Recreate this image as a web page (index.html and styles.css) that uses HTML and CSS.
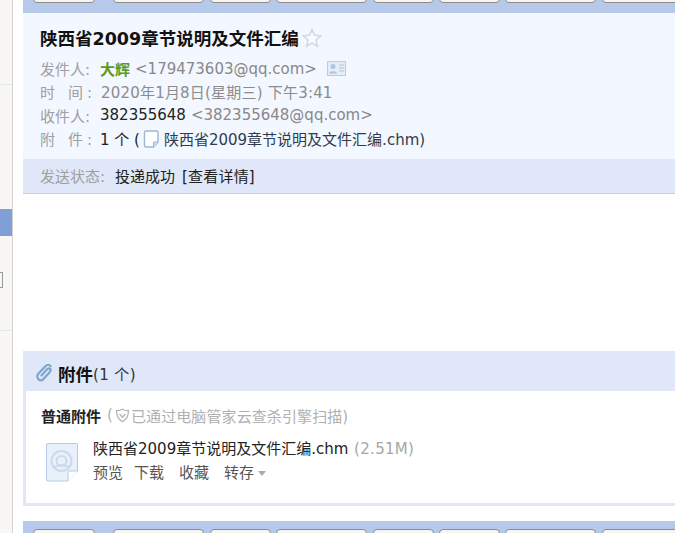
FILE: index.html
```html
<!DOCTYPE html>
<html lang="zh">
<head>
    <meta charset="UTF-8">
    <meta name="viewport" content="width=device-width, initial-scale=1.0">
    <title>陕西省2009章节说明及文件汇编</title>
    <link rel="stylesheet" href="styles.css">
</head>
<body>
    <div class="page">
        <div class="sidebar">
            <div class="side-line"></div>
            <div class="side-active"></div>
            <div class="side-box"></div>
            <div class="side-line side-line-low"></div>
        </div>
        <div class="main">
            <div class="toolbar toolbar-top">
                <span class="tool t1"></span><span class="tool t2"></span><span class="tool t3"></span><span class="tool t4"></span><span class="tool t3"></span><span class="tool t3"></span><span class="tool t2"></span><span class="tool t5"></span>
            </div>
            <div class="head">
                <div class="subject">
                    <h1>陕西省2009章节说明及文件汇编</h1>
                    <svg class="star" width="20" height="20" viewBox="0 0 20 20"><path d="M10 1.500l2.500 5.800 6.300.6-4.800 4.100 1.500 6.200L10 15l-5.500 3.200L6 12 1.200 7.900l6.300-.6z" fill="#f8fafd" stroke="#cfd6e0" stroke-width="1.400"/></svg>
                </div>
                <div class="row">
                    <span class="label">发件人:</span><span class="sender">大辉</span><span class="addr">&lt;179473603@qq.com&gt;</span>
                    <svg class="card" width="19" height="15" viewBox="0 0 19 15"><rect x=".5" y=".5" width="18" height="14" fill="#e4ecf8" stroke="#bccde2"/><circle cx="6" cy="5.500" r="2.500" fill="#afc4de"/><path d="M2 12.500c0-3 8-3 8 0z" fill="#afc4de"/><path d="M12 4h5M12 7h5M12 10h5" stroke="#afc4de"/></svg>
                </div>
                <div class="row">
                    <span class="label label-wide">时 间:</span><span class="muted date">2020年1月8日(星期三) 下午3:41</span>
                </div>
                <div class="row">
                    <span class="label">收件人:</span><span class="dark">382355648</span><span class="addr">&lt;382355648@qq.com&gt;</span>
                </div>
                <div class="row">
                    <span class="label label-wide">附 件:</span><span class="dark">1 个 (</span>
                    <svg class="doc" width="17" height="18" viewBox="0 0 17 18"><path d="M1.500 2.500q0-1.500 1.500-1.500h10.500q1.500 0 1.500 1.500v9.500l-4.500 5H3q-1.500 0-1.500-1.500z" fill="#fff" stroke="#9fb6d4" stroke-width="1.400"/><path d="M10.500 17v-5h4.500" fill="#cfdcee" stroke="#9fb6d4"/></svg>
                    <span class="file-link">陕西省2009章节说明及文件汇编.chm)</span>
                </div>
            </div>
            <div class="status">
                <span class="status-label">发送状态:</span><span class="dark">投递成功</span><span class="dark detail">[查看详情]</span>
            </div>
            <div class="mail-body"></div>
            <div class="attach">
                <div class="attach-head">
                    <svg class="clip" width="17" height="19" viewBox="0 0 17 19"><path d="M14.500 3q-2.300-2.500-4.800 0L2.500 10.500q-2.500 3.200 0 5.800t5.300-.6l6-6.700q1.600-2.200.2-3.300t-3.200.9L5.500 12.500" fill="none" stroke="#7fa6cd" stroke-width="2.200" stroke-linecap="round"/></svg>
                    <strong>附件</strong><span class="count">(1 个)</span>
                </div>
                <div class="attach-body">
                    <div class="attach-type">
                        <strong>普通附件</strong>
                        <span class="scan">(<svg class="shield" width="15" height="15" viewBox="0 0 15 15"><path d="M7.500 1.200q3 1.600 6 1.300 0 7.800-6 11.300-6-3.500-6-11.300 3 .3 6-1.300z" fill="none" stroke="#b4b4b4" stroke-width="1.300"/><path d="M4.500 6l3 3.200 3-3.200" fill="none" stroke="#b4b4b4" stroke-width="1.300"/></svg>已通过电脑管家云查杀引擎扫描)</span>
                    </div>
                    <div class="attach-item">
                        <svg class="big-doc" width="32" height="39" viewBox="0 0 32 39"><path d="M.5 2q0-1.500 1.500-1.500h28q1.500 0 1.500 1.500v26l-10 10H2q-1.500 0-1.500-1.500z" fill="#e8f0fb" stroke="#b5cae6"/><path d="M22 38V29q0-1 1-1h9" fill="#fff" stroke="#b5cae6"/><circle cx="15.500" cy="18" r="10" fill="none" stroke="#ccd9ea" stroke-width="2"/><circle cx="15.500" cy="18" r="5" fill="none" stroke="#ccd9ea" stroke-width="2"/><path d="M8.500 24q7-4 14 0" fill="none" stroke="#ccd9ea" stroke-width="2"/></svg>
                        <div class="item-info">
                            <div class="item-name">陕西省2009章节说明及文件汇编.chm <span class="size">(2.51M)</span></div>
                            <div class="item-actions">
                                <span>预览</span><span>下载</span><span>收藏</span><span>转存<i class="caret"></i></span>
                            </div>
                        </div>
                    </div>
                </div>
            </div>
            <div class="toolbar toolbar-bottom">
                <span class="tool t1"></span><span class="tool t2"></span><span class="tool t3"></span><span class="tool t4"></span><span class="tool t3"></span><span class="tool t3"></span><span class="tool t2"></span><span class="tool t5"></span>
            </div>
        </div>
    </div>
</body>
</html>
```

FILE: styles.css
```css
html, body {
    margin: 0;
    padding: 0;
    height: 533px;
    overflow: hidden;
    background: #fff;
}

body {
    font-family: "DejaVu Sans", "Noto Sans CJK SC", sans-serif;
    font-size: 15px;
    color: #222;
}

.page {
    display: flex;
    height: 533px;
}

/* barre de gauche */
.sidebar {
    flex: none;
    width: 12px;
    height: 533px;
    background: #f8f7f3;
    border-right: 1px solid #d4d4d4;
    overflow: hidden;
}

.side-line {
    height: 1px;
    margin-top: 84px;
    background: #e6e6e6;
}

.side-active {
    height: 27px;
    margin-top: 124px;
    background: #7f9fd6;
}

.side-box {
    width: 2px;
    height: 14px;
    margin-top: 36px;
    border: 1px solid #999;
    border-left: none;
}

.side-line-low {
    margin-top: 42px;
}

.main {
    flex: 1;
    min-width: 0;
    margin-left: 10px;
    overflow: hidden;
}

/* toolbar */
.toolbar {
    display: flex;
    background: #b6c9ea;
    height: 13px;
    padding-left: 10px;
    overflow: hidden;
}

.toolbar-top {
    align-items: flex-end;
    padding-bottom: 10px;
    box-sizing: border-box;
}

.toolbar-bottom {
    margin-top: 15px;
    padding-top: 8px;
    box-sizing: border-box;
}

.tool {
    flex: none;
    height: 12px;
    margin-right: 6px;
    background: #f6f5f2;
    border: 1px solid #8c8c8c;
    box-sizing: border-box;
    border-radius: 4px;
}

.t1 { width: 62px; margin-right: 18px; }
.t2 { width: 91px; }
.t3 { width: 61px; margin-right: 5px; }
.t4 { width: 91px; margin-right: 6px; }
.t5 { width: 90px; }

/* en-tete du message */
.head {
    height: 146px;
    box-sizing: border-box;
    padding: 11px 0 0 17px;
    background: #f3f7ff;
}

.subject {
    display: flex;
    align-items: center;
    height: 27px;
    margin-bottom: 6px;
}

h1 {
    margin: 0;
    font-size: 17.500px;
    font-weight: bold;
    color: #111;
}

.star {
    margin-left: 3px;
}

.row {
    display: flex;
    align-items: center;
    height: 23.300px;
    white-space: pre;
}

.label {
    width: 52px;
    margin-right: 8px;
    color: #a0a0a0;
}

.label-wide {
    text-align-last: justify;
}

.sender {
    color: #5f9a1a;
    font-weight: bold;
}

.addr {
    margin-left: 5px;
    color: #888;
}

.muted {
    color: #8c8c8c;
}

.date {
    margin-left: 1px;
    letter-spacing: .2px;
}

.dark {
    color: #222;
}

.card {
    margin-left: 10px;
}

.doc {
    margin: 0 4px 0 3px;
}

.file-link {
    color: #2f3c50;
}

.status {
    display: flex;
    align-items: center;
    height: 32px;
    padding: 0 0 2px 17px;
    background: #dfe7f8;
    border-bottom: 1px solid #c6cfdc;
}

.status-label {
    width: 75px;
    color: #a0a0a0;
}

.detail {
    margin-left: 7px;
    letter-spacing: .2px;
}

.mail-body {
    height: 157px;
}

/* pieces jointes */
.attach {
    background: #dfe7f8;
    padding-bottom: 3px;
}

.attach-head {
    display: flex;
    align-items: center;
    height: 40px;
    padding: 5px 0 0 13px;
    box-sizing: border-box;
}

.clip {
    margin-top: -3px;
}

.attach-head strong {
    margin-left: 5px;
    font-size: 17.500px;
    color: #111;
}

.count {
    color: #333;
    letter-spacing: .4px;
    margin-left: 0;
}

.attach-body {
    margin-left: 3px;
    height: 112px;
    box-sizing: border-box;
    padding: 12px 0 0 15px;
    background: #fff;
}

.attach-type {
    display: flex;
    align-items: center;
    height: 24px;
}

.attach-type strong {
    font-size: 15px;
    color: #222;
    margin-right: 6px;
}

.scan {
    display: flex;
    align-items: center;
    color: #b0b0b0;
    font-size: 15px;
    letter-spacing: .1px;
}

.shield {
    margin: 0 1px 0 2px;
}

.attach-item {
    display: flex;
    margin-top: 10px;
    padding-left: 5px;
}

.big-doc {
    margin-top: 6px;
    margin-right: 15px;
}

.item-name {
    height: 24px;
    line-height: 24px;
    white-space: nowrap;
}

.size {
    margin-left: 1px;
    letter-spacing: .3px;
    color: #a6a6a6;
}

.item-actions {
    display: flex;
    gap: 11px;
    height: 24px;
    line-height: 24px;
    color: #555;
}

.item-actions span:nth-child(n+3) {
    margin-left: 4px;
}

.caret {
    display: inline-block;
    margin-left: 4px;
    vertical-align: middle;
    border: 4px solid transparent;
    border-top: 5px solid #aaa;
    border-bottom: none;
}
```
